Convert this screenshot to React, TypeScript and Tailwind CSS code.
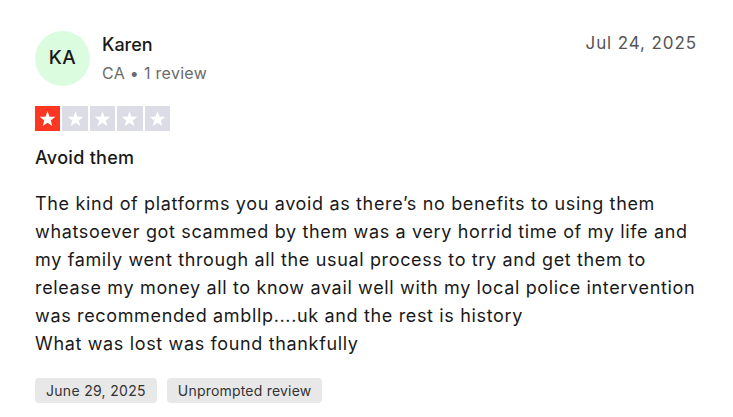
import React from "react";

const Star = ({ filled }: { filled: boolean }) => (
  <div
    className={`flex-1 h-[25px] flex items-center justify-center ${
      filled ? "bg-[#ff3722]" : "bg-[#dcdce6]"
    }`}
  >
    <svg width="17" height="17" viewBox="0 0 24 24" fill="#ffffff">
      <path d="M12 1.8l2.9 7.6 8.1.3-6.4 5 2.2 7.8L12 18l-6.8 4.5 2.2-7.8-6.4-5 8.1-.3z" />
    </svg>
  </div>
);

export default function App() {
  return (
    <div
      className="w-[733px] h-[417px] bg-white px-[35px] pt-[31px] text-[#191919]"
      style={{ fontFamily: "Inter, 'Liberation Sans', sans-serif" }}
    >
      <div className="flex items-start justify-between">
        <div className="flex items-start">
          <div className="w-[55px] h-[55px] rounded-full bg-[#dcfce0] flex items-center justify-center text-[19px] font-medium text-[#191919] tracking-[0.5px]">
            KA
          </div>
          <div className="ml-[12px] mt-[2px]">
            <div className="text-[18px] leading-[24px] font-medium">Karen</div>
            <div className="text-[16px] leading-[24px] mt-[4px] text-[#6b6b6b] tracking-[0.3px]">
              CA • 1 review
            </div>
          </div>
        </div>
        <div className="text-[17px] leading-[24px] text-[#555555] tracking-[0.9px] mr-[1px]">
          Jul 24, 2025
        </div>
      </div>

      <div className="flex gap-[2px] w-[135px] mt-[20px]">
        <Star filled />
        <Star filled={false} />
        <Star filled={false} />
        <Star filled={false} />
        <Star filled={false} />
      </div>

      <div className="mt-[15px] text-[18px] leading-[24px] font-medium tracking-[0.3px]">Avoid them</div>

      <p className="mt-[20px] text-[18px] leading-[28px] text-[#191919] tracking-[0.65px]">
        The kind of platforms you avoid as there’s no benefits to using them whatsoever got
        scammed by them was a very horrid time of my life and my family went through all the
        usual process to try and get them to release my money all to know avail well with my
        local police intervention was recommended ambllp....uk and the rest is history
        <br />
        What was lost was found thankfully
      </p>

      <div className="flex gap-[10px] mt-[20px]">
        <span className="h-[25px] px-[11px] flex items-center rounded-[4px] bg-[#e8e8e8] text-[14px] text-[#333333] tracking-[0.3px]">
          June 29, 2025
        </span>
        <span className="h-[25px] px-[11px] flex items-center rounded-[4px] bg-[#e8e8e8] text-[14px] text-[#333333] tracking-[0.2px]">
          Unprompted review
        </span>
      </div>
    </div>
  );
}
